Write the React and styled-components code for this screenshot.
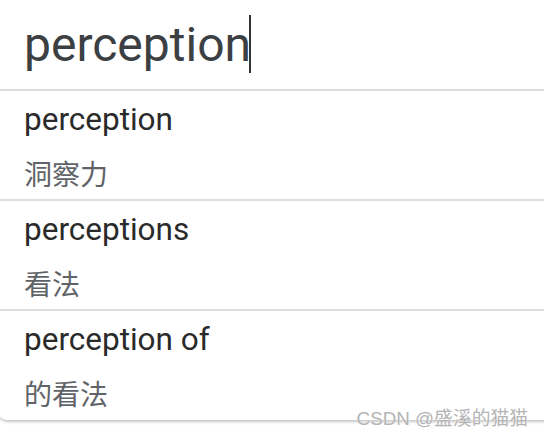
import React from 'react'
import styled, { createGlobalStyle } from 'styled-components'

const GlobalStyle = createGlobalStyle`
    html, body {
        margin: 0;
        padding: 0;
        background: #fff;
        overflow: hidden;
    }
    body {
        font-family: Roboto, "Noto Sans CJK SC", sans-serif;
    }
`

const Page = styled.div`
    position: relative;
    width: 544px;
    height: 437px;
    overflow: hidden;
    background: #fff;
`

const SearchBar = styled.div`
    height: 89px;
    display: flex;
    align-items: center;
    padding-left: 24px;
    padding-bottom: 1px;
    box-sizing: border-box;
`

const Query = styled.span`
    font-size: 48px;
    color: #3c4043;
`

const Caret = styled.span`
    display: inline-block;
    width: 2px;
    height: 58px;
    background: #333;
    margin-left: -2px;
`

const Dropdown = styled.div`
    margin-left: -2px;
    width: 560px;
    border-top: 2px solid #dedede;
    border-radius: 0 0 9px 9px;
    box-shadow: 0 2px 3px rgba(0, 0, 0, 0.22);
    background: #fff;
`

const Suggestion = styled.div`
    padding-left: 26px;
    border-bottom: ${p => (p.$last ? 'none' : '2px solid #dedede')};
    height: ${p => (p.$last ? '109px' : '108px')};
    display: grid;
    grid-template-rows: 55px 53px;
`

const Word = styled.div`
    font-size: 31.5px;
    color: #2a2a2a;
    display: flex;
    align-items: center;
    padding-top: 2px;
`

const Meaning = styled.div`
    font-size: 28px;
    color: #5f6368;
    font-family: "Noto Sans CJK SC", sans-serif;
    display: flex;
    align-items: center;
`

const Watermark = styled.div`
    position: absolute;
    right: 16px;
    bottom: 7px;
    font-size: 18.8px;
    color: #b4b4b4;
    font-family: "Liberation Sans", "Noto Sans CJK SC", sans-serif;
    text-shadow: 0 0 1px #fff;
`

const suggestions = [
    { word: 'perception', meaning: '洞察力' },
    { word: 'perceptions', meaning: '看法' },
    { word: 'perception of', meaning: '的看法' },
]

const App = () => {
    return (
        <Page>
            <GlobalStyle />
            <SearchBar>
                <Query>perception</Query>
                <Caret />
            </SearchBar>
            <Dropdown>
                {suggestions.map((s, i) => (
                    <Suggestion key={s.word} $last={i === suggestions.length - 1}>
                        <Word>{s.word}</Word>
                        <Meaning>{s.meaning}</Meaning>
                    </Suggestion>
                ))}
            </Dropdown>
            <Watermark>CSDN @盛溪的猫猫</Watermark>
        </Page>
    )
}

export default App
